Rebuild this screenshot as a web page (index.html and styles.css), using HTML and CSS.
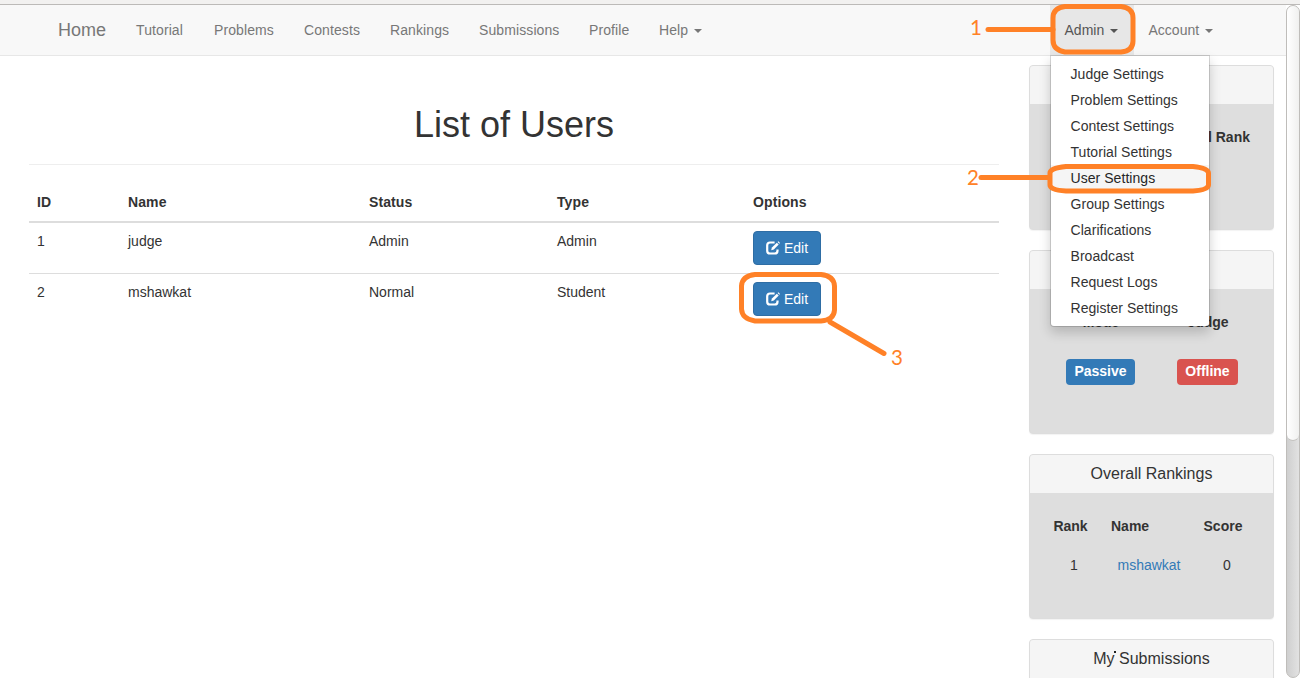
FILE: index.html
```html
<!DOCTYPE html>
<html lang="en">
<head>
<meta charset="utf-8">
<title>List of Users</title>
<link rel="stylesheet" href="styles.css">
</head>
<body>
<div class="chrome-edge"></div>
<div class="window">
  <div class="page">
    <nav class="navbar">
      <a class="brand">Home</a>
      <div class="nav-left">
        <a class="nav-link">Tutorial</a>
        <a class="nav-link">Problems</a>
        <a class="nav-link">Contests</a>
        <a class="nav-link">Rankings</a>
        <a class="nav-link">Submissions</a>
        <a class="nav-link">Profile</a>
        <a class="nav-link">Help <i class="caret"></i></a>
      </div>
      <div class="nav-right">
        <div class="dropdown">
          <a class="nav-link open">Admin <i class="caret"></i></a>
          <div class="menu">
            <a>Judge Settings</a>
            <a>Problem Settings</a>
            <a>Contest Settings</a>
            <a>Tutorial Settings</a>
            <a class="hover">User Settings</a>
            <a>Group Settings</a>
            <a>Clarifications</a>
            <a>Broadcast</a>
            <a>Request Logs</a>
            <a>Register Settings</a>
          </div>
        </div>
        <a class="nav-link">Account <i class="caret"></i></a>
      </div>
    </nav>
    <div class="content">
      <main class="main">
        <h1>List of Users</h1>
        <div class="row head"><span>ID</span><span>Name</span><span>Status</span><span>Type</span><span>Options</span></div>
        <div class="row">
          <span>1</span><span>judge</span><span>Admin</span><span>Admin</span>
          <span><a class="btn"><svg class="icon" viewBox="0 0 14 14"><path d="M8.600 1.500H4Q1.200 1.500 1.200 4.300V9.700Q1.200 12.500 4 12.500H8.700Q11.500 12.500 11.500 9.700V8.400" fill="none" stroke="#fff" stroke-width="2.200"/><path d="M5.200 9.200 5.900 6.600 10.800 1.700 12.700 3.600 7.800 8.500Z" fill="#fff"/><path d="M11.600 1 12.400.3 14 1.900 13.300 2.700Z" fill="#fff"/></svg>Edit</a></span>
        </div>
        <div class="row second">
          <span>2</span><span>mshawkat</span><span>Normal</span><span>Student</span>
          <span><a class="btn"><svg class="icon" viewBox="0 0 14 14"><path d="M8.600 1.500H4Q1.200 1.500 1.200 4.300V9.700Q1.200 12.500 4 12.500H8.700Q11.500 12.500 11.500 9.700V8.400" fill="none" stroke="#fff" stroke-width="2.200"/><path d="M5.200 9.200 5.900 6.600 10.800 1.700 12.700 3.600 7.800 8.500Z" fill="#fff"/><path d="M11.600 1 12.400.3 14 1.900 13.300 2.700Z" fill="#fff"/></svg>Edit</a></span>
        </div>
      </main>
      <aside class="side">
        <section class="panel short">
          <div class="panel-head"></div>
          <div class="panel-body"><div class="rank-label">Overall Rank</div></div>
        </section>
        <section class="panel tall">
          <div class="panel-head"></div>
          <div class="panel-body status">
            <b>Mode</b><b>Judge</b>
            <span class="label blue">Passive</span><span class="label red">Offline</span>
          </div>
        </section>
        <section class="panel short">
          <div class="panel-head">Overall Rankings</div>
          <div class="panel-body ranks">
            <b>Rank</b><b class="left">Name</b><b>Score</b>
            <span class="num">1</span><a class="user">mshawkat</a><span class="score">0</span>
          </div>
        </section>
        <section class="panel short">
          <div class="panel-head">My Submissions</div>
          <div class="panel-body"></div>
        </section>
      </aside>
    </div>
  </div>
  <div class="scrollbar"><div class="thumb"></div></div>
</div>
<svg class="notes" width="1300" height="678" viewBox="0 0 1300 678">
  <g fill="none" stroke="#ff8127" stroke-width="5" stroke-linecap="round" stroke-linejoin="round">
    <path d="M988 29.5H1053"/>
    <path d="M1065 6.5H1121Q1133 8 1133 18V41Q1133 51 1121 52H1065Q1053 50 1053 40V18Q1053 8 1065 6.5Z"/>
    <path d="M981 177.500H1049"/>
    <path d="M1066 166.500H1193Q1208 168 1208.500 173V185Q1208 190 1193 191H1066Q1050 190 1050 185V173Q1050 168 1066 166.500Z"/>
    <path d="M755 274.500H821Q834 276 834.500 286V310Q834 320 821 321H755Q742 319 741.500 309V286Q742 276 755 274.500Z"/>
    <path d="M830 322 884 353.500"/>
  </g>
  <g class="note-text">
    <text x="970" y="35">1</text>
    <text x="967" y="185">2</text>
    <text x="891" y="365">3</text>
  </g>
  <rect x="1114" y="651" width="2" height="2" fill="#222"/>
</svg>
</body>
</html>
```
FILE: styles.css
```css
* { box-sizing: border-box; }
body {
  margin: 0;
  height: 678px;
  overflow: hidden;
  position: relative;
  background: #fff;
  color: #333;
  font: 14px/20px "Liberation Sans", Arial, sans-serif;
}
.chrome-edge { height: 5px; background: #f2f1f0; border-bottom: 1px solid #bcbab8; }
.window { display: flex; height: 673px; }
.page { width: 1286px; height: 673px; overflow: hidden; }
.navbar {
  display: flex;
  height: 51px;
  padding-left: 43px;
  background: #f8f8f8;
  border-bottom: 1px solid #e7e7e7;
  color: #777;
}
.brand { width: 78px; padding: 15px 0 15px 15px; font-size: 18px; }
.nav-left {
  display: grid;
  grid-template-columns: 78px 90px 86px 89px 110px 70px auto;
  letter-spacing: .1px;
}
.nav-link { display: block; padding: 15px; height: 50px; white-space: nowrap; }
.nav-left .nav-link { padding-right: 0; }
.caret {
  display: inline-block;
  margin-left: 2px;
  vertical-align: middle;
  border-top: 4px solid;
  border-left: 4px solid transparent;
  border-right: 4px solid transparent;
}
.nav-right { display: flex; margin-left: auto; padding-right: 58px; }
.nav-right > .nav-link { padding-right: 15px; }
.dropdown { position: relative; width: 84px; }
.open { background: #e7e7e7; color: #555; }
.menu {
  position: absolute;
  z-index: 2;
  top: 50px;
  left: 0;
  width: 160px;
  padding: 5px 0;
  background: #fff;
  background-clip: padding-box;
  border: 1px solid rgba(0,0,0,.15);
  border-radius: 0 0 4px 4px;
  box-shadow: 0 6px 12px rgba(0,0,0,.175);
  color: #333;
}
.menu a { display: block; padding: 3px 20px; white-space: nowrap; letter-spacing: .05px; }
.menu .hover { background: #f5f5f5; color: #262626; }
.content { display: flex; gap: 30px; padding: 9px 12px 0 29px; }
.main { width: 970px; }
h1 {
  margin: 0 0 19px;
  padding: 40px 0 20px;
  height: 100px;
  border-bottom: 1px solid #eee;
  text-align: center;
  font-size: 36px;
  line-height: 40px;
  font-weight: 500;
}
.row { display: grid; grid-template-columns: 91px 241px 188px 196px 1fr; padding: 8px; }
.head { padding: 8px 8px 9px; border-bottom: 2px solid #ddd; font-weight: bold; letter-spacing: .1px; }
.second { border-top: 1px solid #ddd; }
.btn {
  display: flex;
  align-items: center;
  gap: 4px;
  width: 68px;
  height: 34px;
  padding: 0 12px;
  background: #337ab7;
  border: 1px solid #2e6da4;
  border-radius: 4px;
  color: #fff;
}
.icon { width: 14px; height: 14px; flex: none; }
.side { width: 245px; display: flex; flex-direction: column; gap: 20px; }
.panel {
  flex: none;
  background: #dedede;
  border: 1px solid #ddd;
  border-radius: 4px;
  box-shadow: 0 1px 1px rgba(0,0,0,.05);
}
.short { height: 165px; }
.tall { height: 184px; }
.panel-head {
  height: 38px;
  padding-top: 9px;
  background: #f5f5f5;
  border-radius: 3px 3px 0 0;
  text-align: center;
  font-size: 16px;
}
.panel-body { padding-top: 23px; }
.rank-label { padding-right: 23px; text-align: right; font-weight: bold; }
.status { display: grid; grid-template-columns: 70px 62px; column-gap: 41px; row-gap: 27px; padding-left: 36px; text-align: center; }
.label { height: 26px; line-height: 24px; border-radius: 4px; color: #fff; font-weight: bold; }
.blue { background: #337ab7; width: 69px; }
.red { background: #d9534f; width: 61px; }
.ranks { display: grid; grid-template-columns: 41px 84px 56px; column-gap: 10px; row-gap: 19px; padding-left: 20px; text-align: center; }
.ranks .left { text-align: left; padding-left: 10px; }
.num { padding-left: 7px; }
.user { color: #337ab7; padding-left: 12px; }
.score { padding-left: 8px; }
.scrollbar {
  width: 14px;
  height: 673px;
  background: linear-gradient(90deg, #cfcfcf, #e2e2e2);
  border: 1px solid #bfbdba;
  border-radius: 7px;
}
.thumb {
  height: 435px;
  background: linear-gradient(90deg, #fff, #f0f0ef);
  border-bottom: 1px solid #c5c3c0;
  border-radius: 6px;
}
.notes { position: absolute; top: 0; left: 0; z-index: 3; }
.note-text { font: 20.5px Lato, sans-serif; fill: #ff8127; }
```
